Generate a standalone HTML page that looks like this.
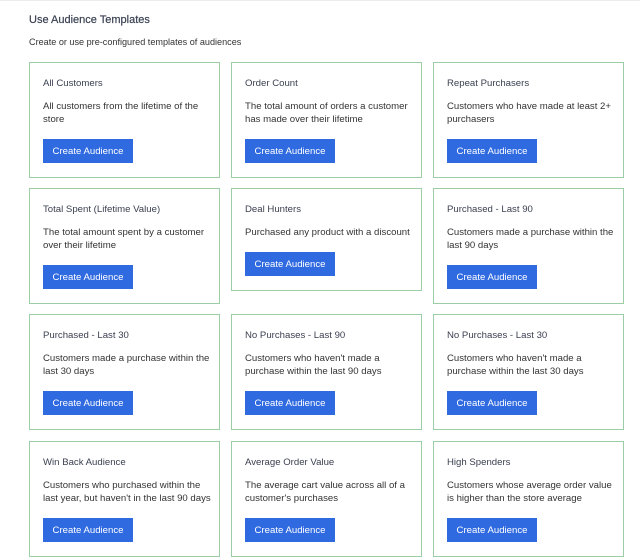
<!DOCTYPE html>
<html><head><meta charset="utf-8"><style>
body{margin:0;width:640px;height:560px;background:#fff;font-family:"Liberation Sans",Arial,sans-serif;color:#3b4150;position:relative;overflow:hidden}
.top{position:absolute;left:0;top:0;width:640px;height:1px;background:#ececec}
h1{position:absolute;left:29px;top:14px;margin:0;font-size:11px;font-weight:normal;color:#3a4152;-webkit-text-stroke:0.2px #3a4152}
.sub{position:absolute;left:29px;top:37px;font-size:9.1px;color:#333}
.card{position:absolute;width:191px;border:1px solid #9ccea5;box-sizing:border-box}
.t{position:absolute;left:13px;top:15px;font-size:9.6px;color:#3a4050}
.d{position:absolute;left:13px;top:37px;width:172px;font-size:9.6px;line-height:13px;color:#333}
.b{position:absolute;left:13px;width:90px;height:24px;background:#2f6ae0;color:#fff;font-size:9.6px;display:flex;align-items:center;justify-content:center;padding-top:1px;box-sizing:border-box}
</style></head><body>
<div class="top"></div>
<h1>Use Audience Templates</h1>
<div class="sub">Create or use pre-configured templates of audiences</div>

<div class="card" style="left:29px;top:62px;height:116px"><div class="t">All Customers</div><div class="d">All customers from the lifetime of the store</div><div class="b" style="top:76px">Create Audience</div></div>
<div class="card" style="left:231px;top:62px;height:116px"><div class="t">Order Count</div><div class="d">The total amount of orders a customer has made over their lifetime</div><div class="b" style="top:76px">Create Audience</div></div>
<div class="card" style="left:433px;top:62px;height:116px"><div class="t">Repeat Purchasers</div><div class="d">Customers who have made at least 2+ purchasers</div><div class="b" style="top:76px">Create Audience</div></div>

<div class="card" style="left:29px;top:188px;height:116px"><div class="t">Total Spent (Lifetime Value)</div><div class="d">The total amount spent by a customer over their lifetime</div><div class="b" style="top:76px">Create Audience</div></div>
<div class="card" style="left:231px;top:188px;height:103px"><div class="t">Deal Hunters</div><div class="d">Purchased any product with a discount</div><div class="b" style="top:63px">Create Audience</div></div>
<div class="card" style="left:433px;top:188px;height:116px"><div class="t">Purchased - Last 90</div><div class="d">Customers made a purchase within the last 90 days</div><div class="b" style="top:76px">Create Audience</div></div>

<div class="card" style="left:29px;top:314px;height:116px"><div class="t">Purchased - Last 30</div><div class="d">Customers made a purchase within the last 30 days</div><div class="b" style="top:76px">Create Audience</div></div>
<div class="card" style="left:231px;top:314px;height:116px"><div class="t">No Purchases - Last 90</div><div class="d">Customers who haven't made a purchase within the last 90 days</div><div class="b" style="top:76px">Create Audience</div></div>
<div class="card" style="left:433px;top:314px;height:116px"><div class="t">No Purchases - Last 30</div><div class="d">Customers who haven't made a purchase within the last 30 days</div><div class="b" style="top:76px">Create Audience</div></div>

<div class="card" style="left:29px;top:441px;height:116px"><div class="t">Win Back Audience</div><div class="d">Customers who purchased within the last year, but haven't in the last 90 days</div><div class="b" style="top:76px">Create Audience</div></div>
<div class="card" style="left:231px;top:441px;height:116px"><div class="t">Average Order Value</div><div class="d">The average cart value across all of a customer's purchases</div><div class="b" style="top:76px">Create Audience</div></div>
<div class="card" style="left:433px;top:441px;height:116px"><div class="t">High Spenders</div><div class="d">Customers whose average order value is higher than the store average</div><div class="b" style="top:76px">Create Audience</div></div>
</body></html>
